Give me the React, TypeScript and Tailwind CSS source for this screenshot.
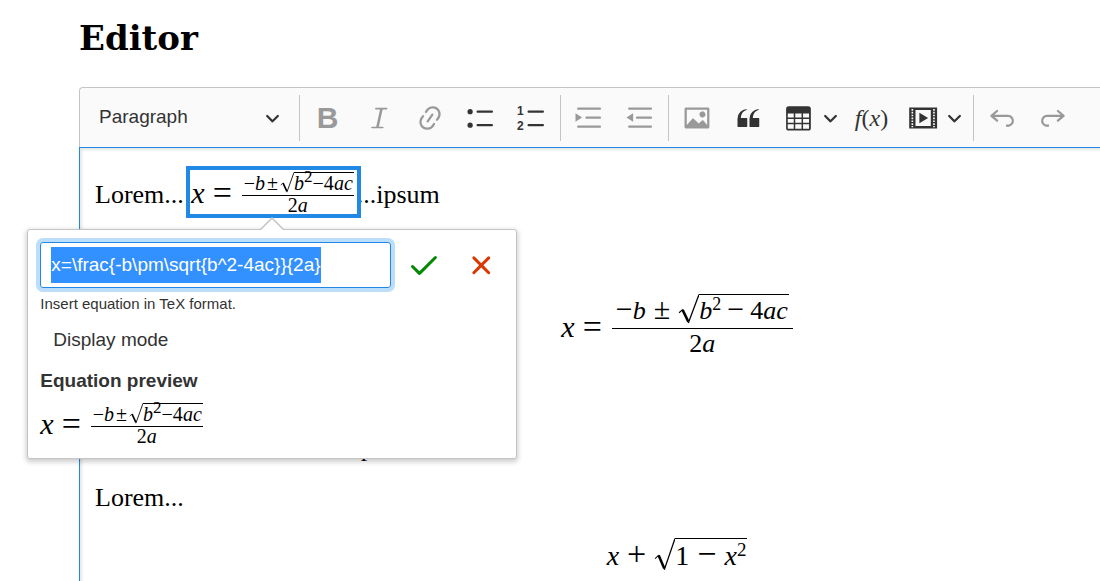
import React, { useEffect, useRef, useState } from "react";

const UNDO =
  "m5.042 9.367 2.189 1.837a.75.75 0 0 1-.965 1.149l-3.788-3.18a.747.747 0 0 1-.21-.284.75.75 0 0 1 .17-.945L6.23 4.762a.75.75 0 1 1 .964 1.15L4.863 7.866h8.917A.75.75 0 0 1 14 7.9a4 4 0 1 1-1.477 7.718l.344-1.489a2.5 2.5 0 1 0 1.094-4.73l.008-.032H5.042z";
const REDO =
  "m14.958 9.367-2.189 1.837a.75.75 0 0 0 .965 1.149l3.788-3.18a.747.747 0 0 0 .21-.284.75.75 0 0 0-.17-.945L13.77 4.762a.75.75 0 1 0-.964 1.15l2.331 1.955H6.22A.75.75 0 0 0 6 7.9a4 4 0 1 0 1.477 7.718l-.344-1.489A2.5 2.5 0 1 1 6.039 9.4l-.008-.032h8.927z";
const LINK =
  "m11.077 15 .991-1.416a.75.75 0 1 1 1.229.86l-1.148 1.64a.748.748 0 0 1-.217.206 5.251 5.251 0 0 1-8.503-5.955.741.741 0 0 1 .12-.274l1.147-1.639a.75.75 0 1 1 1.228.86L4.933 10.7l.006.003a3.75 3.75 0 0 0 6.132 4.294l.006.004zm5.494-5.335a.748.748 0 0 1-.12.274l-1.147 1.639a.75.75 0 1 1-1.228-.86l.86-1.23a3.75 3.75 0 0 0-6.144-4.301l-.86 1.229a.75.75 0 0 1-1.229-.86l1.148-1.64a.748.748 0 0 1 .217-.206 5.251 5.251 0 0 1 8.503 5.955zm-4.563-2.532a.75.75 0 0 1 .184 1.045l-3.155 4.505a.75.75 0 1 1-1.229-.86l3.155-4.506a.75.75 0 0 1 1.045-.184z";
const IMAGE =
  "M6.91 10.54c.26-.23.64-.21.88.03l3.36 3.14 2.23-2.06a.64.64 0 0 1 .87 0l2.52 2.97V4.5H3.2v10.12l3.71-4.08zm10.27-7.51c.6 0 1.09.47 1.09 1.05v11.84c0 .59-.49 1.06-1.09 1.06H2.79c-.6 0-1.09-.47-1.09-1.06V4.08c0-.58.49-1.05 1.1-1.05h14.38zm-5.22 5.56a1.96 1.96 0 1 1 3.4-1.96 1.96 1.96 0 0 1-3.4 1.96z";
const QUOTE =
  "M3 10.423a6.5 6.5 0 0 1 6.056-6.408l.038.67C6.448 5.423 5.354 7.663 5.22 10H9c.552 0 .5.432.5.986v4.511c0 .554-.448.503-1 .503h-5c-.552 0-.5-.449-.5-1.003v-4.574zm8 0a6.5 6.5 0 0 1 6.056-6.408l.038.67c-2.646.739-3.74 2.979-3.873 5.315H17c.552 0 .5.432.5.986v4.511c0 .554-.448.503-1 .503h-5c-.552 0-.5-.449-.5-1.003v-4.574z";
const CHECK =
  "M6.972 16.615a.997.997 0 0 1-.744-.292l-4.596-4.596a1 1 0 1 1 1.414-1.414l3.926 3.926 9.937-9.937a1 1 0 0 1 1.414 1.415L7.717 16.323a.997.997 0 0 1-.745.292z";
const CANCEL =
  "m11.591 10.177 4.243 4.242a1 1 0 0 1-1.415 1.415l-4.242-4.243-4.243 4.243a1 1 0 0 1-1.414-1.415l4.243-4.242L4.52 5.934A1 1 0 0 1 5.934 4.52l4.243 4.243 4.242-4.243a1 1 0 1 1 1.415 1.414l-4.243 4.243z";

const Icon = ({ d, children }: { d?: string; children?: React.ReactNode }) => (
  <svg viewBox="0 0 20 20" className="size-[30px] shrink-0" fill="currentColor">
    {d && <path d={d} />}
    {children}
  </svg>
);

const Chevron = () => (
  <svg
    viewBox="0 0 10 10"
    className="size-[15px] shrink-0 pointer-events-none"
    fill="currentColor"
  >
    <path d="M.941 4.523a.75.75 0 1 1 1.06-1.06l3.006 3.005 3.005-3.005a.75.75 0 1 1 1.06 1.06l-3.549 3.55a.75.75 0 0 1-1.168-.136L.941 4.523z" />
  </svg>
);

const Separator = () => (
  <span className="w-px h-[46px] ml-[3px] mr-0.5 bg-[#c4c4c4] shrink-0" />
);

const ToolButton = ({
  label,
  disabled,
  children,
}: {
  label: string;
  disabled?: boolean;
  children: React.ReactNode;
}) => (
  <button
    aria-label={label}
    disabled={disabled}
    className="flex items-center justify-center w-[51px] h-[46px] shrink-0 disabled:text-[#999999]"
  >
    {children}
  </button>
);

const DropdownButton = ({
  label,
  children,
}: {
  label: string;
  children: React.ReactNode;
}) => (
  <button
    aria-label={label}
    aria-haspopup="true"
    className="flex items-center gap-[9px] h-[46px] pl-[11px] pr-2 shrink-0"
  >
    {children}
    <Chevron />
  </button>
);

const Toolbar = () => (
  <div
    role="toolbar"
    className="flex items-center h-[60px] bg-[#fafafa] border-t border-l border-[#c4c4c4] rounded-tl-sm text-[#333333] font-['Liberation_Sans',sans-serif]"
  >
    <div className="flex items-center w-[216px] pr-4 shrink-0">
      <select
        aria-label="Heading"
        className="flex-1 h-[46px] pl-[19px] appearance-none bg-transparent text-[19px] outline-none"
      >
        <option>Paragraph</option>
      </select>
      <Chevron />
    </div>
    <Separator />
    <ToolButton label="Bold" disabled>
      <span className="text-[30px] leading-[30px] font-bold">B</span>
    </ToolButton>
    <ToolButton label="Italic" disabled>
      <Icon>
        <path
          d="M7.9 3.7h7.2M5.3 16.3h7.2"
          stroke="currentColor"
          strokeWidth="1.1"
          strokeLinecap="round"
        />
        <path d="M11.7 3.7L8.9 16.3" stroke="currentColor" strokeWidth="1.7" />
      </Icon>
    </ToolButton>
    <ToolButton label="Link" disabled>
      <Icon d={LINK} />
    </ToolButton>
    <ToolButton label="Bulleted List">
      <Icon>
        <circle cx="2.75" cy="5.75" r="1.75" />
        <circle cx="2.75" cy="14.75" r="1.75" />
        <path
          d="M7.75 5.75h9.5M7.75 14.75h9.5"
          stroke="currentColor"
          strokeWidth="1.5"
          strokeLinecap="round"
        />
      </Icon>
    </ToolButton>
    <ToolButton label="Numbered List">
      <Icon>
        <text x="0" y="8.1" fontSize="8" fontWeight="bold">
          1
        </text>
        <text x="0" y="18" fontSize="8" fontWeight="bold">
          2
        </text>
        <path
          d="M7.75 5.75h9.5M7.75 14.75h9.5"
          stroke="currentColor"
          strokeWidth="1.5"
          strokeLinecap="round"
        />
      </Icon>
    </ToolButton>
    <Separator />
    <ToolButton label="Increase indent" disabled>
      <Icon>
        <path
          d="M2.8 3.75h14.5M8.3 9.75h9M2.8 15.75h14.5"
          stroke="currentColor"
          strokeWidth="1.5"
          strokeLinecap="round"
        />
        <path d="M1 6.9v5.6l4.4-2.8z" />
      </Icon>
    </ToolButton>
    <ToolButton label="Decrease indent" disabled>
      <Icon>
        <path
          d="M2.8 3.75h14.5M8 9.75h9.3M2.8 15.75h14.5"
          stroke="currentColor"
          strokeWidth="1.5"
          strokeLinecap="round"
        />
        <path d="M5.4 6.9v5.6L1 9.7z" />
      </Icon>
    </ToolButton>
    <Separator />
    <ToolButton label="Insert image" disabled>
      <Icon d={IMAGE} />
    </ToolButton>
    <ToolButton label="Block quote">
      <Icon d={QUOTE} />
    </ToolButton>
    <DropdownButton label="Insert table">
      <Icon>
        <path
          fillRule="evenodd"
          d="M3.2 2.2h12.9a1.8 1.8 0 0 1 1.8 1.8v12.6a1.8 1.8 0 0 1-1.8 1.8H3.2a1.8 1.8 0 0 1-1.8-1.8V4a1.8 1.8 0 0 1 1.8-1.8zM2.5 7v2.6h4V7zm5 0v2.6h4.2V7zm5.2 0v2.6h4V7zM2.5 10.6v2.6h4v-2.6zm5 0v2.6h4.2v-2.6zm5.2 0v2.6h4v-2.6zM2.5 14.2v2.9h4v-2.9zm5 0v2.9h4.2v-2.9zm5.2 0v2.9h4v-2.9z"
        />
      </Icon>
    </DropdownButton>
    <ToolButton label="Insert equation">
      <span className="text-[24px] leading-[30px] font-['Liberation_Serif',serif]">
        <i>f</i>(<i>x</i>)
      </span>
    </ToolButton>
    <DropdownButton label="Insert media">
      <Icon>
        <path fillRule="evenodd" d="M.8 3h18.6v14H.8zM5 4.6v10.8h10.2V4.6z" />
        <path d="M7.6 6.5v7l5.8-3.5z" />
        <path
          d="M2.9 4v12.2M17.3 4v12.2"
          stroke="#fafafa"
          strokeWidth="1.1"
          strokeDasharray="1.1 0.8"
        />
      </Icon>
    </DropdownButton>
    <Separator />
    <ToolButton label="Undo" disabled>
      <Icon d={UNDO} />
    </ToolButton>
    <ToolButton label="Redo" disabled>
      <Icon d={REDO} />
    </ToolButton>
  </div>
);

// Square root: the sign is stretched to the height of what stands under the bar
const Sqrt = ({
  large,
  children,
}: {
  large?: boolean;
  children: React.ReactNode;
}) => (
  <span className="inline-flex items-stretch">
    <svg
      viewBox="0 0 20 28"
      preserveAspectRatio="none"
      className={large ? "w-[21px]" : "w-[14px]"}
      fill="none"
      stroke="currentColor"
    >
      <path d="M1 17.5l3.6-3" strokeWidth="1" />
      <path d="M4.4 14.8l5.4 11" strokeWidth="2.4" />
      <path d="M9.8 27L20 .5" strokeWidth="1.2" />
    </svg>
    <span className="self-baseline border-t border-black pr-px">
      {children}
    </span>
  </span>
);

const Lhs = () => (
  <>
    <span className="text-[30px] leading-[30px]">
      <i>x</i>
    </span>
    <span className="px-2 text-[34px] leading-[30px]">=</span>
  </>
);

const QuadraticInline = () => (
  <span className="inline-flex items-center align-baseline whitespace-nowrap">
    <Lhs />
    <span className="inline-flex flex-col items-center ml-0.5 text-[20px] leading-[20px]">
      <span className="inline-flex pl-0.5 pb-0.5 border-b border-black">
        <span className="pt-px">
          −<i>b</i>
          <span className="px-0.5">±</span>
        </span>
        <Sqrt>
          <i>b</i>
          <sup className="text-[17px]">2</sup>−4<i>ac</i>
        </Sqrt>
      </span>
      <span className="leading-[18px]">
        2<i>a</i>
      </span>
    </span>
  </span>
);

const QuadraticDisplay = () => (
  <div className="flex items-center justify-center">
    <Lhs />
    <span className="inline-flex flex-col items-center ml-0.5 text-[26px] leading-[27px]">
      <span className="inline-flex pb-1 px-1 border-b border-black">
        <span className="pt-px">
          <span className="text-[30px]">−</span>
          <i>b</i>
          <span className="px-2 text-[30px]">±</span>
        </span>
        <Sqrt large>
          <i>b</i>
          <sup className="text-[18px]">2</sup>
          <span className="px-1.5 text-[30px]">−</span>4<i>ac</i>
        </Sqrt>
      </span>
      <span className="leading-[30px]">
        2<i>a</i>
      </span>
    </span>
  </div>
);

const CircleRoot = () => (
  <span className="inline-flex items-baseline text-[28px] leading-[30px] whitespace-nowrap">
    <i>x</i>
    <span className="px-2 text-[34px]">+</span>
    <Sqrt large>
      1<span className="px-2 text-[34px]">−</span>
      <i>x</i>
      <sup className="text-[19px]">2</sup>
    </Sqrt>
  </span>
);

const EquationPopup = () => {
  const [equation, setEquation] = useState("x=\\frac{-b\\pm\\sqrt{b^2-4ac}}{2a}");
  const [allSelected, setAllSelected] = useState(true);
  const [displayMode, setDisplayMode] = useState(false);
  const input = useRef<HTMLInputElement>(null);

  useEffect(() => {
    input.current?.focus({ preventScroll: true });
    input.current?.select();
  }, []);

  const handleSelect = (e: React.SyntheticEvent<HTMLInputElement>) => {
    const { selectionStart, selectionEnd, value } = e.currentTarget;
    setAllSelected(selectionStart === 0 && selectionEnd === value.length);
  };

  return (
    <div className="absolute z-10 top-[59px] -left-[163px] w-[490px] h-[230px] pl-3 pt-3 bg-white border border-[#c4c4c4] rounded-[3px] shadow-[0_2px_5px_1px_rgba(0,0,0,0.2)]">
      <svg
        viewBox="0 0 24 13"
        className="absolute -top-[13px] left-[232px] w-6 h-[13px]"
        fill="white"
      >
        <path d="M0 13L12 1l12 12" stroke="#c4c4c4" strokeWidth="1.5" />
      </svg>
      <form
        onSubmit={(e) => e.preventDefault()}
        className="font-['Liberation_Sans',sans-serif] text-[#333333]"
      >
        <div className="flex items-center">
          <div className="flex items-center w-[351px] h-[46px] mr-1 px-2.5 border border-[#1f89e5] rounded-[3px] shadow-[0_0_0_4px_#bcdefb]">
            <input
              id="equation"
              ref={input}
              value={equation}
              onChange={(e) => setEquation(e.target.value)}
              onSelect={handleSelect}
              className={`field-sizing-content max-w-full h-9 text-[19px] outline-none selection:bg-[#3390ff] selection:text-white ${
                allSelected ? "bg-[#3390ff] text-white" : "bg-white"
              }`}
            />
          </div>
          <button
            type="submit"
            aria-label="Save"
            className="flex justify-center w-[57px] text-[#008a00]"
          >
            <Icon d={CHECK} />
          </button>
          <button
            type="button"
            aria-label="Cancel"
            className="flex justify-center w-[57px] text-[#db3700]"
          >
            <Icon d={CANCEL} />
          </button>
        </div>
        <label htmlFor="equation" className="block mt-1.5 text-[15px] leading-5">
          Insert equation in TeX format.
        </label>
        <button
          type="button"
          aria-pressed={displayMode}
          onClick={() => setDisplayMode(!displayMode)}
          className="block mt-3 ml-[13px] text-[19px] leading-7"
        >
          Display mode
        </button>
        <p className="mt-[13px] text-[19px] leading-7 font-bold">
          Equation preview
        </p>
      </form>
      <div className="mt-2 text-black">
        <QuadraticInline />
      </div>
    </div>
  );
};

const App = () => {
  return (
    <div className="h-screen overflow-hidden bg-white pl-[79px] text-black font-['Liberation_Serif',serif]">
      <h1 className="pt-3.5 text-[34px] leading-[48px] font-bold font-['DejaVu_Serif',serif]">
        Editor
      </h1>
      {/* the editor runs past the right edge of the window */}
      <div className="-mr-[175px] mt-[25px]">
        <Toolbar />
        <div className="h-screen border border-[#1f89e5] px-[15px] text-[26px] leading-[38px] shadow-[inset_2px_2px_3px_rgba(0,0,0,0.1)]">
          <div className="mt-[22px]">
            Lorem...{" "}
            <span className="relative inline-block pl-px pt-0.5 pr-[3px] outline-4 outline-[#1f89e5]">
              <QuadraticInline />
              <EquationPopup />
            </span>
            ...ipsum
          </div>
          <div className="mt-20">
            <QuadraticDisplay />
          </div>
          <p className="mt-[70px] pl-[239px]">...ipsum</p>
          <p className="mt-3">Lorem...</p>
          <div className="mt-[21px] text-center">
            <CircleRoot />
          </div>
        </div>
      </div>
    </div>
  );
};

export default App;
